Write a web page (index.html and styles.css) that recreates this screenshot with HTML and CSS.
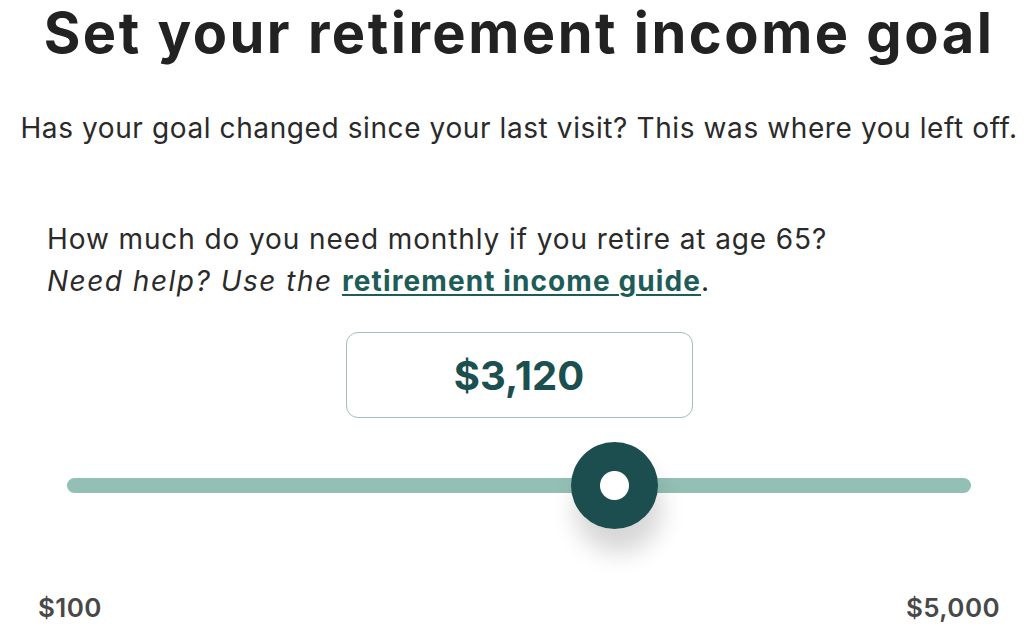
FILE: index.html
```html
<!DOCTYPE html>
<html lang="en">
<head>
  <meta charset="UTF-8">
  <title>Retirement income goal</title>
  <link rel="stylesheet" href="styles.css">
</head>
<body>
  <main class="goal">
    <h1 class="goal-title">Set your retirement income goal</h1>
    <p class="goal-intro">Has your goal changed since your last visit? This was where you left off.</p>

    <div class="goal-question">
      <p>How much do you need monthly if you retire at age 65?</p>
      <p><em>Need help? Use the </em><a href="#">retirement income guide</a>.</p>
    </div>

    <div class="amount-box" id="amount">$3,120</div>

    <input class="amount-slider" id="slider" type="range" min="100" max="5000" step="10" value="3120">

    <div class="slider-labels">
      <span>$100</span>
      <span>$5,000</span>
    </div>
  </main>

  <script>
    const slider = document.getElementById('slider');
    const amount = document.getElementById('amount');

    slider.addEventListener('input', () => {
      amount.textContent = '$' + Number(slider.value).toLocaleString('en-US');
    });
  </script>
</body>
</html>
```

FILE: styles.css
```css
body {
  margin: 0;
  background: #fff;
  color: #2a2a2a;
  font-family: "Inter", "Noto Sans", sans-serif;
}
.goal {
  width: 962px;
  margin-left: 38px;
}
.goal-title {
  margin: 6px 0 0;
  font-size: 56px;
  line-height: 54px;
  font-weight: 700;
  color: #222;
  text-align: center;
  letter-spacing: 2.5px;
}
.goal-intro {
  margin: 52px -30px 0;
  font-size: 28px;
  line-height: 32px;
  text-align: center;
  white-space: nowrap;
  letter-spacing: 0.6px;
}
.goal-question {
  margin-top: 74px;
  padding-left: 9px;
  font-size: 28px;
  line-height: 42px;
  letter-spacing: 0.9px;
}
.goal-question p {
  margin: 0;
}
.goal-question em {
  letter-spacing: 1.5px;
}
.goal-question a {
  color: #1d5c58;
  font-weight: 700;
  letter-spacing: 1.1px;
  text-decoration-thickness: 2px;
  text-underline-offset: 3px;
}
.amount-box {
  width: 345px;
  height: 84px;
  margin: 30px auto 0;
  border: 1px solid #a9bcb8;
  border-radius: 12px;
  display: flex;
  justify-content: center;
  align-items: center;
  font-size: 40px;
  font-weight: 700;
  color: #1c4f4f;
}
.amount-slider {
  display: block;
  width: 904px;
  height: 87px;
  margin: 24px 0 0 29px;
  padding: 0;
  background: transparent;
  -webkit-appearance: none;
  appearance: none;
}
.amount-slider::-webkit-slider-runnable-track {
  height: 15px;
  border-radius: 8px;
  background: #94bfb4;
}
.amount-slider::-webkit-slider-thumb {
  -webkit-appearance: none;
  width: 87px;
  height: 87px;
  margin-top: -36px;
  border-radius: 50%;
  background: radial-gradient(circle, #fff 14px, #1c4e4f 15px);
  box-shadow: 4px 24px 24px rgba(0, 0, 0, 0.16);
  cursor: pointer;
}
.slider-labels {
  display: flex;
  justify-content: space-between;
  margin-top: 64px;
  font-size: 26px;
  line-height: 29px;
  font-weight: 600;
  color: #484848;
  letter-spacing: 0.4px;
}
```
